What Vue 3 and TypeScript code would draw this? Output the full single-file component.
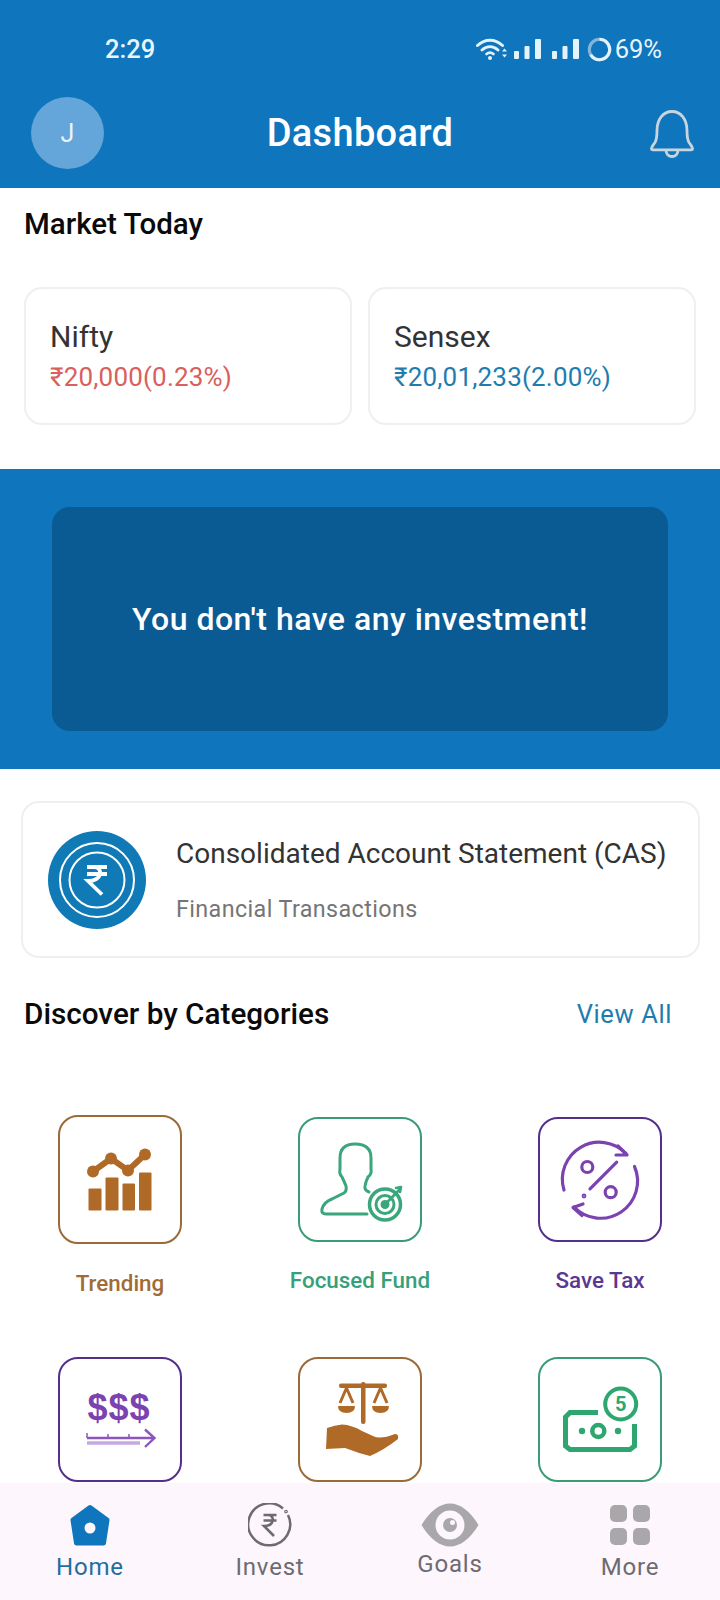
<script setup lang="ts">
interface Market {
  name: string
  value: string
  tone: 'down' | 'up'
}

const markets: Market[] = [
  { name: 'Nifty', value: '₹20,000(0.23%)', tone: 'down' },
  { name: 'Sensex', value: '₹20,01,233(2.00%)', tone: 'up' },
]
</script>

<template>
  <div class="page">
    <header class="top">
      <div class="status">
        <span class="time">2:29</span>
        <div class="status-right">
          <svg class="wifi" width="31" height="22" viewBox="0 0 31 22" fill="none" stroke="#e3f3fb" stroke-linecap="round">
            <path d="M1.5 7.5C9 .5 19 .5 26.5 7.5" stroke-width="3" />
            <path d="M6 12c5-4.5 11-4.5 16 0" stroke-width="3" />
            <path d="M10.5 16c2.5-2 4.5-2 7 0" stroke-width="2.6" />
            <circle cx="14" cy="20" r="2" fill="#e3f3fb" stroke="none" />
            <path d="M26 13.5l2.5-3 2.5 3zM26 16.5l2.5 3 2.5-3z" fill="#e3f3fb" stroke="none" />
          </svg>
          <svg class="bars" width="28" height="22" viewBox="0 0 28 22" fill="#e3f3fb">
            <rect x="1" y="13" width="5" height="8" rx="1" />
            <rect x="11.500" y="8" width="5" height="13" rx="1" />
            <rect x="22" y="1" width="6" height="20" rx="1" />
          </svg>
          <svg class="bars" width="28" height="22" viewBox="0 0 28 22" fill="#e3f3fb">
            <rect x="1" y="13" width="5" height="8" rx="1" />
            <rect x="11.500" y="8" width="5" height="13" rx="1" />
            <rect x="22" y="1" width="6" height="20" rx="1" />
          </svg>
          <svg class="ring" width="25" height="25" viewBox="0 0 24 24" fill="none">
            <circle cx="12" cy="12" r="9.8" stroke="#7fb6dc" stroke-width="3" />
            <path d="M12 2.2A9.8 9.8 0 1 1 3.5 17" stroke="#e3f3fb" stroke-width="3" />
          </svg>
          <span class="pct">69%</span>
        </div>
      </div>
      <div class="appbar">
        <div class="avatar">J</div>
        <h1 class="title">Dashboard</h1>
        <svg class="bell" width="46" height="50" viewBox="0 0 46 50" fill="none" stroke="#c9d5de" stroke-width="2.8" stroke-linejoin="round">
          <path d="M2.5 40.5c0-2 1.5-3 3.5-6 1.5-2.5 2-5 2-12 0-11 6-19 15-19s15 8 15 19c0 7 .5 9.5 2 12 2 3 3.5 4 3.5 6 0 .8-.5 1.3-1.5 1.3H4c-1 0-1.500-.5-1.500-1.300z" />
          <path d="M17 42c0 4 2.5 6.5 6 6.5s6-2.5 6-6.5" />
        </svg>
      </div>
    </header>

    <main class="main">
      <h2 class="market-title">Market Today</h2>
      <div class="markets">
        <div v-for="m in markets" :key="m.name" class="card market">
          <div class="market-name">{{ m.name }}</div>
          <div class="market-value" :class="m.tone">{{ m.value }}</div>
        </div>
      </div>

      <section class="band">
        <div class="band-inner">You don't have any investment!</div>
      </section>

      <div class="card cas">
        <svg class="cas-icon" width="98" height="98" viewBox="-49 -49 98 98" fill="none">
          <circle r="49" fill="#0f7ab5" />
          <circle r="37" stroke="#fff" stroke-width="2" />
          <circle r="27.5" stroke="#fff" stroke-width="2" />
          <path d="M-10 -13H10M-10 -6H10M-3 -13C6 -13 6 1 -9 1L5 14.5" stroke="#fff" stroke-width="3.8" />
        </svg>
        <div class="cas-text">
          <div class="cas-title">Consolidated Account Statement (CAS)</div>
          <div class="cas-sub">Financial Transactions</div>
        </div>
      </div>

      <div class="discover">
        <h2 class="discover-title">Discover by Categories</h2>
        <span class="view-all">View All</span>
      </div>

      <div class="grid">
        <div class="tile tile-first">
          <div class="box box-tall brown">
            <svg width="90" height="90" viewBox="-45 -45 90 90" fill="#b06a28">
              <rect x="-31.5" y="8.5" width="13" height="22" rx="1" />
              <rect x="-14.5" y="-2.5" width="13" height="33" rx="1" />
              <rect x="2.5" y="3.5" width="12.5" height="27" rx="1" />
              <rect x="19" y="-7.5" width="12.5" height="38" rx="1" />
              <path d="M-27 -8.5L-9 -21.5L8 -9.5L25 -25.5" fill="none" stroke="#b06a28" stroke-width="6" />
              <circle cx="-27" cy="-8.5" r="6" />
              <circle cx="-9" cy="-21.5" r="6" />
              <circle cx="8" cy="-9.5" r="6" />
              <circle cx="25" cy="-25.5" r="6" />
            </svg>
          </div>
          <span class="label l-brown">Trending</span>
        </div>

        <div class="tile">
          <div class="box green">
            <svg width="90" height="90" viewBox="-45 -45 90 90" fill="none" stroke="#3aa67c" stroke-width="3" stroke-linecap="round" stroke-linejoin="round">
              <path d="M7 34H-34Q-39 34 -38 29Q-36 22 -28 19L-16 13Q-13 11 -14 6Q-16 1 -18 -3Q-21 -6 -20 -11L-20 -22Q-20 -36 -5 -36Q11 -36 11 -22L11 -11Q12 -6 8 -3Q6 1 5 6Q4 10 9 12" />
              <circle cx="25" cy="24.5" r="15.5" stroke-width="3.5" />
              <circle cx="25" cy="24.5" r="9" stroke-width="3" />
              <circle cx="25" cy="24.5" r="3" fill="#3aa67c" />
              <path d="M25 24.5L40 9M36 8L41 7L40 12" stroke-width="2.6" />
            </svg>
          </div>
          <span class="label l-green">Focused Fund</span>
        </div>

        <div class="tile">
          <div class="box purple">
            <svg width="90" height="90" viewBox="-45 -45 90 90" fill="none" stroke="#7b42b0" stroke-width="3.2" stroke-linecap="round" stroke-linejoin="round">
              <path d="M-36 10A37 37 0 0 1 26 -26.5M34.5 -13.5A37 37 0 0 1 -26 27" />
              <path d="M18 -34L27 -25L16 -25M-17 24L-27 27.5L-18 35.5" />
              <circle cx="-12.7" cy="-13" r="5.5" />
              <circle cx="10.7" cy="12.2" r="5.5" />
              <path d="M16.7 -17.8L-10 8.8" />
              <circle cx="-16" cy="16" r=".8" fill="#7b42b0" />
            </svg>
          </div>
          <span class="label l-purple">Save Tax</span>
        </div>

        <div class="tile">
          <div class="box purple">
            <svg width="90" height="90" viewBox="-45 -45 90 90" fill="none" stroke="#8a55bd" stroke-width="2.4">
              <text class="dollars" x="-1" y="0" text-anchor="middle" fill="#7b42b0" stroke="none">$$$</text>
              <path d="M-33 18H34M25 9.5L34.5 18L25 27" />
              <path d="M-33 23H20" stroke-width="3.5" stroke="#c7a9e2" />
              <path d="M-33 13V18M-12 14V18M9 14V18" stroke-width="1.5" />
            </svg>
          </div>
        </div>

        <div class="tile">
          <div class="box brown">
            <svg width="90" height="90" viewBox="-45 -45 90 90" fill="#b06a28">
              <path d="M-33 8Q-25 5 -18 4.5Q-8 5 2 11L13 16Q20 20 35 14Q39 14 38 19Q24 30 10 36Q-2 33 -15 28L-34 29Z" />
              <rect x="1" y="-38" width="4.5" height="42" rx="2" />
              <rect x="-21" y="-36.5" width="48" height="4.5" rx="2" />
              <path d="M-22 -14H-5Q-5 -7 -13.5 -7Q-22 -7 -22 -14ZM12 -14H29Q29 -7 20.5 -7Q12 -7 12 -14Z" />
              <path d="M-13.5 -32L-20 -17M-13.5 -32L-7 -17M20.5 -32L14 -17M20.5 -32L27 -17" fill="none" stroke="#b06a28" stroke-width="3" />
            </svg>
          </div>
        </div>

        <div class="tile">
          <div class="box green">
            <svg width="90" height="90" viewBox="-45 -45 90 90" fill="none" stroke="#2ea66f" stroke-width="5">
              <path d="M-2 -7.5H-30L-34.5 -3V26L-30 29.500H30L34.5 26V4" />
              <circle cx="20.7" cy="-16" r="15.5" stroke-width="4" />
              <text class="coin" x="20.7" y="-9" text-anchor="middle" fill="#2ea66f" stroke="none">5</text>
              <circle cx="-1.7" cy="11" r="6" stroke-width="4.5" />
              <circle cx="-18" cy="11" r="3.2" fill="#2ea66f" stroke="none" />
              <circle cx="18" cy="11" r="3.2" fill="#2ea66f" stroke="none" />
            </svg>
          </div>
        </div>
      </div>
    </main>

    <nav class="nav">
      <div class="nav-item">
        <svg width="44" height="44" viewBox="-22 -22 44 44">
          <path d="M0 -17.5L17 -5L13.5 18H-13.5L-17 -5Z" fill="#0f75bc" stroke="#0f75bc" stroke-width="5" stroke-linejoin="round" />
          <circle cy="3" r="5.5" fill="#fdf6fd" />
        </svg>
        <span class="nav-label active">Home</span>
      </div>
      <div class="nav-item">
        <svg width="44" height="44" viewBox="-22 -22 44 44" fill="none" stroke="#6d6b70" stroke-width="2.5">
          <path d="M13 -16.5A21 21 0 1 0 18 -10" />
          <circle cx="16" cy="-13.5" r=".6" />
          <path d="M-6.5 -10H6.5M-6.5 -4.5H6.5M-2 -10C5 -10 5 1 -6 1L4 11" stroke-width="2.6" />
        </svg>
        <span class="nav-label">Invest</span>
      </div>
      <div class="nav-item nav-goals">
        <svg width="58" height="44" viewBox="-29 -22 58 44">
          <path d="M-28.5 0C-20 -14 -10 -21.5 0 -21.5S20 -14 28.5 0C20 14 10 21.5 0 21.5S-20 14 -28.5 0Z" fill="#a9a7aa" />
          <circle r="14.5" fill="#fdf6fd" />
          <circle r="7" fill="#a9a7aa" />
          <circle cx="2.5" cy="-2.5" r="2.5" fill="#fdf6fd" />
        </svg>
        <span class="nav-label">Goals</span>
      </div>
      <div class="nav-item">
        <div class="more-grid">
          <i></i><i></i><i></i><i></i>
        </div>
        <span class="nav-label">More</span>
      </div>
    </nav>
  </div>
</template>

<style scoped>
.page {
  width: 720px;
  height: 1600px;
  display: flex;
  flex-direction: column;
  overflow: hidden;
  background: #fff;
  font-family: Roboto, "Liberation Sans", sans-serif;
}
.top {
  flex: none;
  height: 188px;
  background: #0f75bc;
  color: #fff;
}
.status {
  height: 86px;
  padding: 12px 58px 0 105px;
  box-sizing: border-box;
  display: flex;
  align-items: center;
  justify-content: space-between;
  color: #e8f5fc;
}
.time { font-size: 25.5px; font-weight: 500; }
.status-right { display: flex; align-items: center; }
.wifi { margin-right: 6px; }
.bars { margin-right: 10px; }
.ring { margin-left: -2px; margin-right: 3px; }
.pct { font-size: 25.5px; }
.appbar {
  height: 92px;
  padding: 2px 25px 0;
  box-sizing: border-box;
  display: grid;
  grid-template-columns: 1fr auto 1fr;
  align-items: center;
}
.avatar {
  width: 73px;
  height: 72px;
  margin-left: 6px;
  border-radius: 50%;
  background: #64a5da;
  display: flex;
  align-items: center;
  justify-content: center;
  font-size: 25px;
  color: #eaf4fb;
}
.title {
  margin: 0;
  font-size: 38px;
  font-weight: 500;
  letter-spacing: 0.3px;
}
.bell { justify-self: end; }
.main {
  flex: 1;
  min-height: 0;
  overflow: hidden;
}
.market-title {
  margin: 20px 0 0 24px;
  font-size: 29.5px;
  line-height: 32px;
  font-weight: 500;
  color: #0a0a0a;
}
.card {
  background: #fff;
  border: 2px solid #efefef;
  box-sizing: border-box;
}
.markets {
  margin: 47px 24px 0;
  display: grid;
  grid-template-columns: 1fr 1fr;
  gap: 16px;
}
.market {
  height: 138px;
  border-radius: 18px;
  padding: 31px 0 0 24px;
}
.market-name {
  font-size: 30px;
  line-height: 34px;
  color: #333;
}
.market-value {
  margin-top: 7px;
  font-size: 26px;
  line-height: 32px;
  letter-spacing: 0.2px;
}
.down { color: #d9605c; }
.up { color: #1f7dae; }
.band {
  margin-top: 44px;
  height: 300px;
  background: #0f75bc;
  padding: 38px 52px;
  box-sizing: border-box;
}
.band-inner {
  height: 224px;
  border-radius: 18px;
  background: #0a5a94;
  display: flex;
  align-items: center;
  justify-content: center;
  color: #fff;
  font-size: 32px;
  font-weight: 500;
  letter-spacing: 0.5px;
}
.cas {
  margin: 32px 20px 0 21px;
  height: 157px;
  border-radius: 18px;
  display: flex;
  align-items: center;
  padding: 0 0 0 25px;
  gap: 30px;
}
.cas-icon { flex: none; }
.cas-title {
  font-size: 28px;
  line-height: 34px;
  color: #333;
  white-space: nowrap;
}
.cas-sub {
  margin-top: 24px;
  font-size: 23.3px;
  line-height: 28px;
  color: #757575;
  letter-spacing: 0.4px;
}
.discover {
  margin: 38px 48px 0 24px;
  display: flex;
  align-items: center;
  justify-content: space-between;
}
.discover-title {
  margin: 0;
  font-size: 29.7px;
  line-height: 36px;
  font-weight: 500;
  color: #0a0a0a;
}
.view-all {
  font-size: 25.5px;
  color: #1f7dae;
  letter-spacing: 0.6px;
}
.grid {
  margin-top: 83px;
  display: grid;
  grid-template-columns: repeat(3, 240px);
}
.tile {
  height: 240px;
  display: flex;
  flex-direction: column;
  align-items: center;
  box-sizing: border-box;
  padding-top: 2px;
}
.tile-first { padding-top: 0; }
.box {
  flex: none;
  width: 124px;
  height: 125px;
  box-sizing: border-box;
  border: 2px solid;
  border-radius: 20px;
  display: flex;
  align-items: center;
  justify-content: center;
  background: #fff;
}
.box-tall { height: 129px; }
.brown { border-color: #9a6a38; }
.green { border-color: #3a9b74; }
.purple { border-color: #54308c; }
.label {
  margin-top: 25px;
  font-size: 22.4px;
  line-height: 26px;
  font-weight: 500;
}
.tile-first .label { margin-top: 26px; }
.l-brown { color: #a26b33; }
.l-green { color: #36a078; }
.l-purple { color: #5a3792; }
.dollars {
  font-family: "Liberation Sans", sans-serif;
  font-size: 36px;
  font-weight: 700;
  letter-spacing: 1px;
}
.coin {
  font-family: Roboto, sans-serif;
  font-size: 20px;
  font-weight: 700;
}
.nav {
  flex: none;
  height: 117px;
  background: #fdf6fd;
  display: grid;
  grid-template-columns: repeat(4, 180px);
}
.nav-item {
  display: flex;
  flex-direction: column;
  align-items: center;
  padding-top: 20px;
  box-sizing: border-box;
}
.nav-label {
  margin-top: 5px;
  font-size: 24px;
  line-height: 30px;
  color: #6d6b70;
  letter-spacing: 0.8px;
}
.nav-label.active { color: #1f6f9f; }
.nav-goals .nav-label { margin-top: 2px; }
.more-grid {
  width: 40px;
  height: 44px;
  display: grid;
  grid-template-columns: 17px 17px;
  grid-auto-rows: 17px;
  gap: 6px;
  align-content: center;
}
.more-grid i {
  background: #a9a7aa;
  border-radius: 5px;
}
</style>
